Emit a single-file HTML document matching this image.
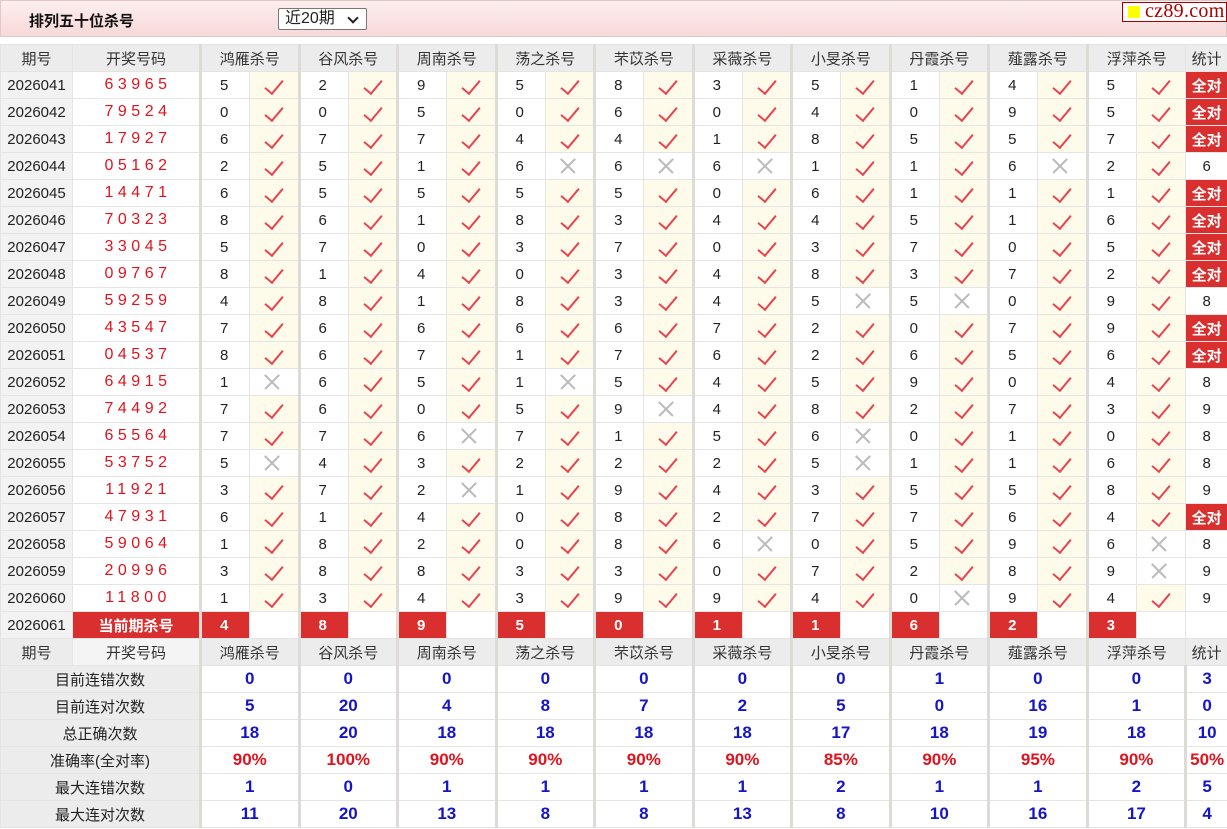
<!DOCTYPE html>
<html><head><meta charset="utf-8"><style>
*{box-sizing:border-box;margin:0;padding:0}
body{width:1227px;height:829px;overflow:hidden;background:#fff;font-family:"Liberation Sans","Noto Sans CJK SC",sans-serif;font-size:15px;color:#222}
.top{position:absolute;left:0;top:0;width:1227px;height:37px;background:linear-gradient(#fdeeee,#f7d9d9);border:1px solid #e0c8c8}
.title{position:absolute;left:28px;top:9px;font-weight:bold;font-size:15px;color:#111}
.sel{position:absolute;left:277px;top:7px;width:89px;height:22px;border:1px solid #777;border-radius:2px;background:#fff;font-size:16px;padding-left:6px;line-height:20px}
.sel:after{content:"";position:absolute;right:9px;top:5px;width:6px;height:6px;border-right:2px solid #222;border-bottom:2px solid #222;transform:rotate(45deg)}
.logo{position:absolute;left:1121px;top:1px;width:105px;height:20px;border:1px solid #a00;background:#fff;font-family:"Liberation Serif",serif;font-size:20px;color:#a00;line-height:17px;padding-left:22px;letter-spacing:0.3px}
.logo:before{content:"";position:absolute;left:5px;top:3px;width:12px;height:12px;background:#ff0}
table{position:absolute;left:0;top:44px;border-collapse:collapse;table-layout:fixed;width:1227px}
td{height:27px;border:1px solid #e4e4e4;text-align:center;padding:0;white-space:nowrap;overflow:hidden}
tr.h td{background:#ececec;color:#333}
td.q{background:#f2f2f2;font-size:15px}
td.w{color:#e0141e;letter-spacing:4.5px;padding-left:4px;font-size:16px}
td.n{border-left:3px solid #dddbd5;text-align:left;padding-left:18px}
td.y,td.x{position:relative;background:#fffbea}
td.x{background:#fff}
td.y:after{content:"";position:absolute;left:19px;top:4px;width:8px;height:16px;border-right:2px solid #e8434f;border-bottom:2px solid #e8434f;transform:rotate(40deg)}
td.x:before,td.x:after{content:"";position:absolute;left:12px;top:12px;width:20px;height:1.5px;background:#bbb;transform:rotate(45deg)}
td.x:after{transform:rotate(-45deg)}
td.g{border-left:3px solid #dddbd5}
td.a{background:#d9302f;color:#fff;font-weight:bold;font-size:15px}
td.c{background:#d9302f;color:#fff;font-weight:bold;text-align:left;padding-left:18px;border-left:3px solid #dddbd5}
td.s{font-size:15px}
td.l{background:#ececec}
td.b{color:#1515c8;font-weight:bold;font-size:17px;border-left:3px solid #dddbd5}
td.r{color:#e0141e;font-weight:bold;font-size:17px;border-left:3px solid #dddbd5}
</style></head><body>
<div class="top"><div class="title">排列五十位杀号</div><div class="sel">近20期</div><div class="logo">cz89.com</div></div>
<table>
<colgroup><col style="width:72px"><col style="width:128px">
<col style="width:49px"><col style="width:49.5px"><col style="width:49px"><col style="width:49.5px"><col style="width:49px"><col style="width:49.5px"><col style="width:49px"><col style="width:49.5px"><col style="width:49px"><col style="width:49.5px"><col style="width:49px"><col style="width:49.5px"><col style="width:49px"><col style="width:49.5px"><col style="width:49px"><col style="width:49.5px"><col style="width:49px"><col style="width:49.5px"><col style="width:49px"><col style="width:49.5px">
<col style="width:42px"></colgroup>
<tr class="h"><td>期号</td><td>开奖号码</td><td colspan="2" class="g">鸿雁杀号</td><td colspan="2" class="g">谷风杀号</td><td colspan="2" class="g">周南杀号</td><td colspan="2" class="g">荡之杀号</td><td colspan="2" class="g">芣苡杀号</td><td colspan="2" class="g">采薇杀号</td><td colspan="2" class="g">小旻杀号</td><td colspan="2" class="g">丹霞杀号</td><td colspan="2" class="g">薤露杀号</td><td colspan="2" class="g">浮萍杀号</td><td>统计</td></tr>
<tr><td class="q">2026041</td><td class="w">63965</td><td class="n">5</td><td class="y"></td><td class="n">2</td><td class="y"></td><td class="n">9</td><td class="y"></td><td class="n">5</td><td class="y"></td><td class="n">8</td><td class="y"></td><td class="n">3</td><td class="y"></td><td class="n">5</td><td class="y"></td><td class="n">1</td><td class="y"></td><td class="n">4</td><td class="y"></td><td class="n">5</td><td class="y"></td><td class="a">全对</td></tr>
<tr><td class="q">2026042</td><td class="w">79524</td><td class="n">0</td><td class="y"></td><td class="n">0</td><td class="y"></td><td class="n">5</td><td class="y"></td><td class="n">0</td><td class="y"></td><td class="n">6</td><td class="y"></td><td class="n">0</td><td class="y"></td><td class="n">4</td><td class="y"></td><td class="n">0</td><td class="y"></td><td class="n">9</td><td class="y"></td><td class="n">5</td><td class="y"></td><td class="a">全对</td></tr>
<tr><td class="q">2026043</td><td class="w">17927</td><td class="n">6</td><td class="y"></td><td class="n">7</td><td class="y"></td><td class="n">7</td><td class="y"></td><td class="n">4</td><td class="y"></td><td class="n">4</td><td class="y"></td><td class="n">1</td><td class="y"></td><td class="n">8</td><td class="y"></td><td class="n">5</td><td class="y"></td><td class="n">5</td><td class="y"></td><td class="n">7</td><td class="y"></td><td class="a">全对</td></tr>
<tr><td class="q">2026044</td><td class="w">05162</td><td class="n">2</td><td class="y"></td><td class="n">5</td><td class="y"></td><td class="n">1</td><td class="y"></td><td class="n">6</td><td class="x"></td><td class="n">6</td><td class="x"></td><td class="n">6</td><td class="x"></td><td class="n">1</td><td class="y"></td><td class="n">1</td><td class="y"></td><td class="n">6</td><td class="x"></td><td class="n">2</td><td class="y"></td><td class="s">6</td></tr>
<tr><td class="q">2026045</td><td class="w">14471</td><td class="n">6</td><td class="y"></td><td class="n">5</td><td class="y"></td><td class="n">5</td><td class="y"></td><td class="n">5</td><td class="y"></td><td class="n">5</td><td class="y"></td><td class="n">0</td><td class="y"></td><td class="n">6</td><td class="y"></td><td class="n">1</td><td class="y"></td><td class="n">1</td><td class="y"></td><td class="n">1</td><td class="y"></td><td class="a">全对</td></tr>
<tr><td class="q">2026046</td><td class="w">70323</td><td class="n">8</td><td class="y"></td><td class="n">6</td><td class="y"></td><td class="n">1</td><td class="y"></td><td class="n">8</td><td class="y"></td><td class="n">3</td><td class="y"></td><td class="n">4</td><td class="y"></td><td class="n">4</td><td class="y"></td><td class="n">5</td><td class="y"></td><td class="n">1</td><td class="y"></td><td class="n">6</td><td class="y"></td><td class="a">全对</td></tr>
<tr><td class="q">2026047</td><td class="w">33045</td><td class="n">5</td><td class="y"></td><td class="n">7</td><td class="y"></td><td class="n">0</td><td class="y"></td><td class="n">3</td><td class="y"></td><td class="n">7</td><td class="y"></td><td class="n">0</td><td class="y"></td><td class="n">3</td><td class="y"></td><td class="n">7</td><td class="y"></td><td class="n">0</td><td class="y"></td><td class="n">5</td><td class="y"></td><td class="a">全对</td></tr>
<tr><td class="q">2026048</td><td class="w">09767</td><td class="n">8</td><td class="y"></td><td class="n">1</td><td class="y"></td><td class="n">4</td><td class="y"></td><td class="n">0</td><td class="y"></td><td class="n">3</td><td class="y"></td><td class="n">4</td><td class="y"></td><td class="n">8</td><td class="y"></td><td class="n">3</td><td class="y"></td><td class="n">7</td><td class="y"></td><td class="n">2</td><td class="y"></td><td class="a">全对</td></tr>
<tr><td class="q">2026049</td><td class="w">59259</td><td class="n">4</td><td class="y"></td><td class="n">8</td><td class="y"></td><td class="n">1</td><td class="y"></td><td class="n">8</td><td class="y"></td><td class="n">3</td><td class="y"></td><td class="n">4</td><td class="y"></td><td class="n">5</td><td class="x"></td><td class="n">5</td><td class="x"></td><td class="n">0</td><td class="y"></td><td class="n">9</td><td class="y"></td><td class="s">8</td></tr>
<tr><td class="q">2026050</td><td class="w">43547</td><td class="n">7</td><td class="y"></td><td class="n">6</td><td class="y"></td><td class="n">6</td><td class="y"></td><td class="n">6</td><td class="y"></td><td class="n">6</td><td class="y"></td><td class="n">7</td><td class="y"></td><td class="n">2</td><td class="y"></td><td class="n">0</td><td class="y"></td><td class="n">7</td><td class="y"></td><td class="n">9</td><td class="y"></td><td class="a">全对</td></tr>
<tr><td class="q">2026051</td><td class="w">04537</td><td class="n">8</td><td class="y"></td><td class="n">6</td><td class="y"></td><td class="n">7</td><td class="y"></td><td class="n">1</td><td class="y"></td><td class="n">7</td><td class="y"></td><td class="n">6</td><td class="y"></td><td class="n">2</td><td class="y"></td><td class="n">6</td><td class="y"></td><td class="n">5</td><td class="y"></td><td class="n">6</td><td class="y"></td><td class="a">全对</td></tr>
<tr><td class="q">2026052</td><td class="w">64915</td><td class="n">1</td><td class="x"></td><td class="n">6</td><td class="y"></td><td class="n">5</td><td class="y"></td><td class="n">1</td><td class="x"></td><td class="n">5</td><td class="y"></td><td class="n">4</td><td class="y"></td><td class="n">5</td><td class="y"></td><td class="n">9</td><td class="y"></td><td class="n">0</td><td class="y"></td><td class="n">4</td><td class="y"></td><td class="s">8</td></tr>
<tr><td class="q">2026053</td><td class="w">74492</td><td class="n">7</td><td class="y"></td><td class="n">6</td><td class="y"></td><td class="n">0</td><td class="y"></td><td class="n">5</td><td class="y"></td><td class="n">9</td><td class="x"></td><td class="n">4</td><td class="y"></td><td class="n">8</td><td class="y"></td><td class="n">2</td><td class="y"></td><td class="n">7</td><td class="y"></td><td class="n">3</td><td class="y"></td><td class="s">9</td></tr>
<tr><td class="q">2026054</td><td class="w">65564</td><td class="n">7</td><td class="y"></td><td class="n">7</td><td class="y"></td><td class="n">6</td><td class="x"></td><td class="n">7</td><td class="y"></td><td class="n">1</td><td class="y"></td><td class="n">5</td><td class="y"></td><td class="n">6</td><td class="x"></td><td class="n">0</td><td class="y"></td><td class="n">1</td><td class="y"></td><td class="n">0</td><td class="y"></td><td class="s">8</td></tr>
<tr><td class="q">2026055</td><td class="w">53752</td><td class="n">5</td><td class="x"></td><td class="n">4</td><td class="y"></td><td class="n">3</td><td class="y"></td><td class="n">2</td><td class="y"></td><td class="n">2</td><td class="y"></td><td class="n">2</td><td class="y"></td><td class="n">5</td><td class="x"></td><td class="n">1</td><td class="y"></td><td class="n">1</td><td class="y"></td><td class="n">6</td><td class="y"></td><td class="s">8</td></tr>
<tr><td class="q">2026056</td><td class="w">11921</td><td class="n">3</td><td class="y"></td><td class="n">7</td><td class="y"></td><td class="n">2</td><td class="x"></td><td class="n">1</td><td class="y"></td><td class="n">9</td><td class="y"></td><td class="n">4</td><td class="y"></td><td class="n">3</td><td class="y"></td><td class="n">5</td><td class="y"></td><td class="n">5</td><td class="y"></td><td class="n">8</td><td class="y"></td><td class="s">9</td></tr>
<tr><td class="q">2026057</td><td class="w">47931</td><td class="n">6</td><td class="y"></td><td class="n">1</td><td class="y"></td><td class="n">4</td><td class="y"></td><td class="n">0</td><td class="y"></td><td class="n">8</td><td class="y"></td><td class="n">2</td><td class="y"></td><td class="n">7</td><td class="y"></td><td class="n">7</td><td class="y"></td><td class="n">6</td><td class="y"></td><td class="n">4</td><td class="y"></td><td class="a">全对</td></tr>
<tr><td class="q">2026058</td><td class="w">59064</td><td class="n">1</td><td class="y"></td><td class="n">8</td><td class="y"></td><td class="n">2</td><td class="y"></td><td class="n">0</td><td class="y"></td><td class="n">8</td><td class="y"></td><td class="n">6</td><td class="x"></td><td class="n">0</td><td class="y"></td><td class="n">5</td><td class="y"></td><td class="n">9</td><td class="y"></td><td class="n">6</td><td class="x"></td><td class="s">8</td></tr>
<tr><td class="q">2026059</td><td class="w">20996</td><td class="n">3</td><td class="y"></td><td class="n">8</td><td class="y"></td><td class="n">8</td><td class="y"></td><td class="n">3</td><td class="y"></td><td class="n">3</td><td class="y"></td><td class="n">0</td><td class="y"></td><td class="n">7</td><td class="y"></td><td class="n">2</td><td class="y"></td><td class="n">8</td><td class="y"></td><td class="n">9</td><td class="x"></td><td class="s">9</td></tr>
<tr><td class="q">2026060</td><td class="w">11800</td><td class="n">1</td><td class="y"></td><td class="n">3</td><td class="y"></td><td class="n">4</td><td class="y"></td><td class="n">3</td><td class="y"></td><td class="n">9</td><td class="y"></td><td class="n">9</td><td class="y"></td><td class="n">4</td><td class="y"></td><td class="n">0</td><td class="x"></td><td class="n">9</td><td class="y"></td><td class="n">4</td><td class="y"></td><td class="s">9</td></tr>
<tr><td class="q">2026061</td><td class="a">当前期杀号</td><td class="c">4</td><td></td><td class="c">8</td><td></td><td class="c">9</td><td></td><td class="c">5</td><td></td><td class="c">0</td><td></td><td class="c">1</td><td></td><td class="c">1</td><td></td><td class="c">6</td><td></td><td class="c">2</td><td></td><td class="c">3</td><td></td><td></td></tr>
<tr class="h"><td>期号</td><td style="background:#f4f4f4">开奖号码</td><td colspan="2" class="g">鸿雁杀号</td><td colspan="2" class="g">谷风杀号</td><td colspan="2" class="g">周南杀号</td><td colspan="2" class="g">荡之杀号</td><td colspan="2" class="g">芣苡杀号</td><td colspan="2" class="g">采薇杀号</td><td colspan="2" class="g">小旻杀号</td><td colspan="2" class="g">丹霞杀号</td><td colspan="2" class="g">薤露杀号</td><td colspan="2" class="g">浮萍杀号</td><td>统计</td></tr>
<tr><td colspan="2" class="l">目前连错次数</td><td colspan="2" class="b">0</td><td colspan="2" class="b">0</td><td colspan="2" class="b">0</td><td colspan="2" class="b">0</td><td colspan="2" class="b">0</td><td colspan="2" class="b">0</td><td colspan="2" class="b">0</td><td colspan="2" class="b">1</td><td colspan="2" class="b">0</td><td colspan="2" class="b">0</td><td class="b">3</td></tr>
<tr><td colspan="2" class="l">目前连对次数</td><td colspan="2" class="b">5</td><td colspan="2" class="b">20</td><td colspan="2" class="b">4</td><td colspan="2" class="b">8</td><td colspan="2" class="b">7</td><td colspan="2" class="b">2</td><td colspan="2" class="b">5</td><td colspan="2" class="b">0</td><td colspan="2" class="b">16</td><td colspan="2" class="b">1</td><td class="b">0</td></tr>
<tr><td colspan="2" class="l">总正确次数</td><td colspan="2" class="b">18</td><td colspan="2" class="b">20</td><td colspan="2" class="b">18</td><td colspan="2" class="b">18</td><td colspan="2" class="b">18</td><td colspan="2" class="b">18</td><td colspan="2" class="b">17</td><td colspan="2" class="b">18</td><td colspan="2" class="b">19</td><td colspan="2" class="b">18</td><td class="b">10</td></tr>
<tr><td colspan="2" class="l">准确率(全对率)</td><td colspan="2" class="r">90%</td><td colspan="2" class="r">100%</td><td colspan="2" class="r">90%</td><td colspan="2" class="r">90%</td><td colspan="2" class="r">90%</td><td colspan="2" class="r">90%</td><td colspan="2" class="r">85%</td><td colspan="2" class="r">90%</td><td colspan="2" class="r">95%</td><td colspan="2" class="r">90%</td><td class="r">50%</td></tr>
<tr><td colspan="2" class="l">最大连错次数</td><td colspan="2" class="b">1</td><td colspan="2" class="b">0</td><td colspan="2" class="b">1</td><td colspan="2" class="b">1</td><td colspan="2" class="b">1</td><td colspan="2" class="b">1</td><td colspan="2" class="b">2</td><td colspan="2" class="b">1</td><td colspan="2" class="b">1</td><td colspan="2" class="b">2</td><td class="b">5</td></tr>
<tr><td colspan="2" class="l">最大连对次数</td><td colspan="2" class="b">11</td><td colspan="2" class="b">20</td><td colspan="2" class="b">13</td><td colspan="2" class="b">8</td><td colspan="2" class="b">8</td><td colspan="2" class="b">13</td><td colspan="2" class="b">8</td><td colspan="2" class="b">10</td><td colspan="2" class="b">16</td><td colspan="2" class="b">17</td><td class="b">4</td></tr>
</table>
</body></html>
